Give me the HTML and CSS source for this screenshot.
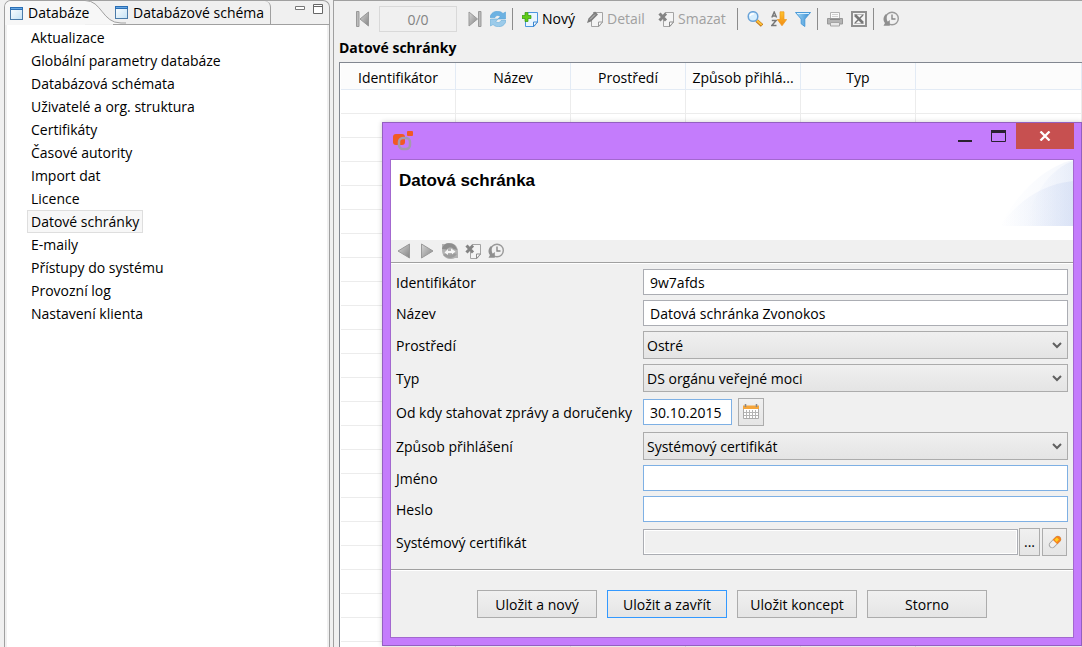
FILE: index.html
```html
<!DOCTYPE html>
<html lang="cs">
<head>
<meta charset="utf-8">
<title>Datové schránky</title>
<link rel="stylesheet" href="styles.css">
</head>
<body>
<svg class="defs" aria-hidden="true">
  <defs>
    <linearGradient id="gray" x1="0" y1="0" x2="1" y2="1"><stop offset="0" stop-color="#d6d6d6"/><stop offset="1" stop-color="#858585"/></linearGradient>
    <linearGradient id="winfill" x1="0" y1="0" x2="1" y2="1"><stop offset="0" stop-color="#fff"/><stop offset="1" stop-color="#c4e2f5"/></linearGradient>
    <linearGradient id="funnel" x1="0" x2="1"><stop offset="0" stop-color="#a6dcf8"/><stop offset="1" stop-color="#3388d0"/></linearGradient>
    <linearGradient id="orange" x1="0" y1="0" x2="0" y2="1"><stop offset="0" stop-color="#ffc52e"/><stop offset="1" stop-color="#f28a12"/></linearGradient>
    <linearGradient id="swoosh" x1="0" x2="1"><stop offset="0" stop-color="#cfdcf5" stop-opacity="0"/><stop offset="1" stop-color="#c3d1f0" stop-opacity=".62"/></linearGradient>
  </defs>
  <symbol id="i-window" viewBox="0 0 13 13"><rect x=".5" y=".5" width="12" height="12" fill="url(#winfill)" stroke="#4b7ba9"/><path d="M0 0h13v3H0z" fill="#2b6fb5"/><path d="M1 1h11v1H1z" fill="#69a9e4"/></symbol>
  <symbol id="i-clock" viewBox="0 0 16 16"><circle cx="9" cy="7.5" r="6.300" fill="#f1f1f1" stroke="#9a9a9a" stroke-width="1.400"/><path d="M9 3.500V8h3.500" fill="none" stroke="#888" stroke-width="1.400"/><path d="M2.600 3.200C-.2 6.500 0 10 2 12L.5 14.700h6.300V9L4.700 10.700C3.300 8.700 3 6 4.200 3.500z" fill="#8f8f8f"/></symbol>
  <symbol id="i-delete" viewBox="0 0 16 16"><path d="M7 1.500h8.500v9.500L12 15.500H5.500V9" fill="#f4f4f4" stroke="#a4a4a4"/><path d="M11.500 15.500V11h4z" fill="#fff" stroke="#8b8b8b"/><path d="M1.500 2.500l6.500 7M8 2.500l-6.500 7" stroke="#848484" stroke-width="3"/></symbol>
  <symbol id="i-edit" viewBox="0 0 16 16"><path d="M6 1.500h9.500v9.500L12 15.500H4.500V8" fill="#f4f4f4" stroke="#a4a4a4"/><path d="M11.500 15.500V11h4z" fill="#fff" stroke="#999"/><path d="M8 .5L11 3.500 4 10.500 0 12l1.500-4.500z" fill="#7d7d7d"/><path d="M3 8.500l5-5" stroke="#c8c8c8"/></symbol>
</svg>

<aside class="view">
  <div class="tabbar" role="tablist">
    <button class="tab tab-active" role="tab" aria-selected="true">
      <svg class="tab-curve" viewBox="0 0 42 24"><path d="M0 .5h1C18 .5 18 23.500 37 23.500h5V24H0z" fill="#f7f7f7"/><path d="M0 .5h1C18 .5 18 23 37 23h5" fill="none" stroke="#a0a0a0"/></svg>
      <svg class="i13"><use href="#i-window"/></svg><span>Databáze</span>
    </button>
    <button class="tab tab-other" role="tab" aria-selected="false"><svg class="i13"><use href="#i-window"/></svg><span>Databázové schéma</span></button>
    <div class="tab-tools">
      <button aria-label="Minimalizovat"><svg width="10" height="12"><path d="M.5 3.500h9v3h-9z" fill="#fff" stroke="#777"/></svg></button>
      <button aria-label="Maximalizovat"><svg width="10" height="12"><path d="M.5 1.500h9v9h-9zM0 3.500h10" fill="#fff" stroke="#666"/></svg></button>
    </div>
  </div>
  <ul class="tree">
    <li><a href="#">Aktualizace</a></li>
    <li><a href="#">Globální parametry databáze</a></li>
    <li><a href="#">Databázová schémata</a></li>
    <li><a href="#">Uživatelé a org. struktura</a></li>
    <li><a href="#">Certifikáty</a></li>
    <li><a href="#">Časové autority</a></li>
    <li><a href="#">Import dat</a></li>
    <li><a href="#">Licence</a></li>
    <li><a href="#" class="selected">Datové schránky</a></li>
    <li><a href="#">E-maily</a></li>
    <li><a href="#">Přístupy do systému</a></li>
    <li><a href="#">Provozní log</a></li>
    <li><a href="#">Nastavení klienta</a></li>
  </ul>
</aside>

<main class="editor">
  <div class="toolbar">
    <button aria-label="První"><svg class="i16" viewBox="0 0 16 16"><path d="M1.500 .5H4v15H1.500z" fill="#bbb" stroke="#999"/><path d="M13.500 1v14L5 8z" fill="url(#gray)" stroke="#999"/></svg></button>
    <input class="pager" value="0/0" aria-label="Záznam" disabled>
    <button aria-label="Poslední"><svg class="i16" viewBox="0 0 16 16"><path d="M12.500 .5H15v15h-2.500z" fill="#bbb" stroke="#999"/><path d="M3 1v14l8.500-7z" fill="url(#gray)" stroke="#999"/></svg></button>
    <button aria-label="Obnovit"><svg class="i16" viewBox="0 0 16 16"><path d="M0 6.500C1-.2 9-1.500 13 2.500L15.500 1v7H8l2.200-2.500C8.500 4 6 4 5 6.500z" fill="#6db2e2" stroke="#58a2d6" stroke-width=".6"/><path d="M16 9.500c-1 6.700-9 8-13 4L.5 15V8H8l-2.200 2.500c1.700 1.500 4.200 1.500 5.200-1z" fill="#9ccbea" stroke="#67acd9" stroke-width=".6"/></svg></button>
    <span class="sep"></span>
    <button class="labelled new"><svg class="i16" viewBox="0 0 16 16"><path d="M6 1.500h9.500V11L12 15.500H3.500V8" fill="#e9f5ff" stroke="#4b96df"/><path d="M11.500 15.500V11h4z" fill="#fff" stroke="#3b86d0"/><path d="M3 1.500h3v3h3v3H6v3H3v-3H0v-3h3z" fill="#62cc18" stroke="#319510" stroke-width=".7"/></svg><span>Nový</span></button>
    <button class="labelled detail" disabled><svg class="i16"><use href="#i-edit"/></svg><span>Detail</span></button>
    <button class="labelled remove" disabled><svg class="i16"><use href="#i-delete"/></svg><span>Smazat</span></button>
    <span class="sep"></span>
    <button aria-label="Hledat"><svg class="i16" viewBox="0 0 16 16"><path d="M9.500 9.500l5.500 5" stroke="#b96d13" stroke-width="3.400"/><path d="M9.800 9.500l5 4.600" stroke="#ffc23b" stroke-width="2"/><circle cx="6" cy="5.500" r="4.800" fill="#d7efff" stroke="#6aa3d8" stroke-width="1.500"/><path d="M3 5c.5-2 2-2.500 4-2.300" stroke="#fff" stroke-width="1.500" fill="none"/></svg></button>
    <button aria-label="Řadit"><svg class="i16" viewBox="0 0 16 16"><path d="M.8 6.500L3.200 1l2.400 5.500M1.500 5h3.400M.8 9.500h4.400l-4.400 5h4.700" fill="none" stroke="#777" stroke-width="1.400"/><path d="M9 .8h4v7.700h2.700L11 14.800 6.300 8.500H9z" fill="url(#orange)" stroke="#ed9821" stroke-width=".7"/></svg></button>
    <button aria-label="Filtr"><svg class="i16" viewBox="0 0 16 16"><path d="M.5 1.500h15L9.800 8v7.500l-3.600-2.700V8z" fill="url(#funnel)" stroke="#4a9ad8"/><path d="M2 2.500h12" stroke="#d9f1ff"/></svg></button>
    <span class="sep"></span>
    <button aria-label="Tisk"><svg class="i16" viewBox="0 0 16 16"><path d="M3.500 7V1.500h9V7" fill="#fafafa" stroke="#b4b4b4"/><path d="M5 3.500h6M5 5.500h6" stroke="#d0d0d0"/><path d="M.5 7.500h15V13H.5z" fill="#b4b4b4" stroke="#999"/><path d="M3.500 11.500h9v3.500h-9z" fill="#e8e8e8" stroke="#a4a4a4"/><path d="M3 8.500h10" stroke="#888"/></svg></button>
    <button aria-label="Export do Excelu"><svg class="i16" viewBox="0 0 16 16"><path d="M1 1h14v14H1z" fill="#f5f5f5" stroke="#909090" stroke-width="2"/><path d="M3 3.500h10M3 12.500h10" stroke="#bbb"/><path d="M4 4l8 8" stroke="#777" stroke-width="2.600"/><path d="M12 4l-8 8" stroke="#777" stroke-width="1.500"/></svg></button>
    <span class="sep"></span>
    <button aria-label="Historie"><svg class="i16"><use href="#i-clock"/></svg></button>
  </div>
  <h1>Datové schránky</h1>
  <div class="table-wrap">
    <table>
      <colgroup><col class="c"><col class="c"><col class="c"><col class="c"><col class="c"><col></colgroup>
      <thead><tr><th>Identifikátor</th><th>Název</th><th>Prostředí</th><th>Způsob přihlá...</th><th>Typ</th><th></th></tr></thead>
      <tbody>
        <tr><td></td><td></td><td></td><td></td><td></td><td></td></tr>
        <tr><td></td><td></td><td></td><td></td><td></td><td></td></tr>
        <tr><td></td><td></td><td></td><td></td><td></td><td></td></tr>
        <tr><td></td><td></td><td></td><td></td><td></td><td></td></tr>
        <tr><td></td><td></td><td></td><td></td><td></td><td></td></tr>
        <tr><td></td><td></td><td></td><td></td><td></td><td></td></tr>
        <tr><td></td><td></td><td></td><td></td><td></td><td></td></tr>
        <tr><td></td><td></td><td></td><td></td><td></td><td></td></tr>
        <tr><td></td><td></td><td></td><td></td><td></td><td></td></tr>
        <tr><td></td><td></td><td></td><td></td><td></td><td></td></tr>
        <tr><td></td><td></td><td></td><td></td><td></td><td></td></tr>
        <tr><td></td><td></td><td></td><td></td><td></td><td></td></tr>
        <tr><td></td><td></td><td></td><td></td><td></td><td></td></tr>
        <tr><td></td><td></td><td></td><td></td><td></td><td></td></tr>
        <tr><td></td><td></td><td></td><td></td><td></td><td></td></tr>
        <tr><td></td><td></td><td></td><td></td><td></td><td></td></tr>
        <tr><td></td><td></td><td></td><td></td><td></td><td></td></tr>
        <tr><td></td><td></td><td></td><td></td><td></td><td></td></tr>
        <tr><td></td><td></td><td></td><td></td><td></td><td></td></tr>
        <tr><td></td><td></td><td></td><td></td><td></td><td></td></tr>
        <tr><td></td><td></td><td></td><td></td><td></td><td></td></tr>
        <tr><td></td><td></td><td></td><td></td><td></td><td></td></tr>
        <tr><td></td><td></td><td></td><td></td><td></td><td></td></tr>
        <tr><td></td><td></td><td></td><td></td><td></td><td></td></tr>
      </tbody>
    </table>
  </div>
</main>

<section class="dialog" role="dialog" aria-labelledby="dialog-title">
  <div class="titlebar">
    <svg class="logo" viewBox="0 0 21 20"><rect x="0" y="3" width="12" height="11" rx="3" fill="#f15a24"/><rect x="14" y="0" width="6" height="5" rx="1" fill="#f15a24"/><rect x="6" y="7" width="11" height="11" rx="4" fill="none" stroke="#a59aae" stroke-width="2.500"/></svg>
    <div class="win-buttons">
      <button aria-label="Minimalizovat"><svg width="14" height="12"><path d="M0 10h14v2H0z" fill="#2a2130"/></svg></button>
      <button aria-label="Maximalizovat"><svg width="15" height="12"><path d="M.5 .5h14v11H.5z" fill="none" stroke="#2a2130"/><path d="M0 0h15v3H0z" fill="#2a2130"/></svg></button>
      <button class="close" aria-label="Zavřít"><svg width="12" height="10"><path d="M1.500 .5l9 9M10.500 .5l-9 9" stroke="#fff" stroke-width="2.300"/></svg></button>
    </div>
  </div>
  <div class="client">
    <header class="banner">
      <h2 id="dialog-title">Datová schránka</h2>
      <svg class="swoosh" viewBox="0 0 73 66"><path d="M0 66C15 36 43 7 73 0v66z" fill="url(#swoosh)" opacity=".3"/><path d="M27 66C32 31 53 8 73 1v65z" fill="url(#swoosh)" opacity=".4"/><path d="M0 66C20 38 45 24 73 21v45z" fill="url(#swoosh)" opacity=".6"/></svg>
    </header>
    <div class="dialog-tools">
      <button aria-label="Předchozí"><svg class="i16" viewBox="0 0 16 16"><path d="M13.500 1v14L2 8z" fill="url(#gray)" stroke="#999"/></svg></button>
      <button aria-label="Další"><svg class="i16" viewBox="0 0 16 16"><path d="M2.500 1v14L14 8z" fill="url(#gray)" stroke="#999"/></svg></button>
      <button aria-label="Obnovit"><svg class="i16" viewBox="0 0 16 16"><path d="M0 1h3c4-2 9-1 11.500 2.500C16 6 16 8 16 10v5h-3c-4 2-9 1-11.500-2.500C0 10 0 8 0 6z" fill="#b2b2b2"/><path d="M0 6C1-.5 9-1.500 13 2.500l2.500 4.500-4-1C10 4 6 4 5 6.500z" fill="#8d8d8d"/><path d="M1 12l3 2c4 2 8 1 11-3l-4-1c-2 2-4 2-6 0z" fill="#9c9c9c"/><path d="M2.500 9.500L6 6v2h3V5.500l4.500 3L10 11.500V10H6v2z" fill="#f6f6f6"/></svg></button>
      <button aria-label="Smazat"><svg class="i16"><use href="#i-delete"/></svg></button>
      <button aria-label="Historie"><svg class="i16"><use href="#i-clock"/></svg></button>
    </div>
    <form>
      <div class="fields">
        <label for="ident">Identifikátor</label><input id="ident" type="text" value="9w7afds">
        <label for="name">Název</label><input id="name" type="text" value="Datová schránka Zvonokos">
        <label for="env">Prostředí</label><select id="env"><option>Ostré</option></select>
        <label for="type">Typ</label><select id="type"><option>DS orgánu veřejné moci</option></select>
        <label for="since">Od kdy stahovat zprávy a doručenky</label>
        <div class="row date-row"><input id="since" class="date blue" type="text" value="30.10.2015">
          <button type="button" class="btn calendar" aria-label="Kalendář"><svg class="i16" viewBox="0 0 16 16"><path d="M.5 2.500h15v12H.5z" fill="#fff" stroke="#aaa"/><path d="M0 1.500h16V5H0z" fill="#f4a53a"/><path d="M2.500 0v3M13.500 0v3" stroke="#888" stroke-width="1.500"/><path d="M1 8.500h14M1 11.500h14M3.500 6v8M6.500 6v8M9.500 6v8M12.500 6v8" stroke="#b4b4b4"/></svg></button></div>
        <label for="login">Způsob přihlášení</label><select id="login"><option>Systémový certifikát</option></select>
        <label for="user">Jméno</label><input id="user" class="blue" type="text">
        <label for="pass">Heslo</label><input id="pass" class="blue" type="password">
        <label for="cert">Systémový certifikát</label>
        <div class="row cert-row"><input id="cert" type="text" readonly>
          <button type="button" class="btn browse" aria-label="Vybrat">...</button>
          <button type="button" class="btn erase" aria-label="Vymazat"><svg width="14" height="14" viewBox="0 0 14 14"><path d="M4.200 9.800l5.600-5.600" stroke="#a4a4a4" stroke-width="6.600" stroke-linecap="round"/><path d="M4.200 9.800L7 7" stroke="#f0f0f0" stroke-width="5" stroke-linecap="round"/><path d="M4.700 4.700L7.500 1.900c3-3 7.600 1.600 4.600 4.600L9.300 9.300z" fill="#f58220"/><path d="M6.500 4.700L8.800 2.400 11 4.600 8.700 6.900z" fill="#ffcf1f"/></svg></button></div>
      </div>
      <footer class="actions">
        <button type="button" class="btn">Uložit a nový</button>
        <button type="submit" class="btn primary">Uložit a zavřít</button>
        <button type="button" class="btn">Uložit koncept</button>
        <button type="button" class="btn">Storno</button>
      </footer>
    </form>
  </div>
</section>
</body>
</html>
```
FILE: styles.css
```css
* { box-sizing: border-box; }

body {
  margin: 0;
  height: 100vh;
  display: flex;
  position: relative;
  overflow: hidden;
  background: #f0f0f0;
  color: #000;
  font: 14px/20px "Open Sans", "Noto Sans", sans-serif;
}

button, input, select { font: inherit; color: inherit; margin: 0; }
button { padding: 0; border: 0; background: none; }
svg { display: block; flex: none; }
h1, h2 { margin: 0; }
.defs { position: absolute; width: 0; height: 0; }
.i13 { width: 13px; height: 13px; }
.i16 { width: 16px; height: 16px; }

/* Left view */
.view {
  flex: none;
  width: 326px;
  margin-left: 4px;
  border: 1px solid #a0a0a0;
  border-bottom: 0;
  border-radius: 7px 7px 0 0;
  display: flex;
  flex-direction: column;
}
.tabbar { display: flex; height: 24px; flex: none; }
.tab {
  display: flex;
  align-items: center;
  gap: 5px;
  white-space: nowrap;
}
.tab-active {
  position: relative;
  width: 80px;
  padding-left: 5px;
  border-radius: 6px 0 0 0;
  background: #f7f7f7;
}
.tab-active span { position: relative; }
.tab-curve { position: absolute; left: 79px; top: -1px; width: 42px; height: 24px; }
.tab-other {
  width: 186px;
  padding-left: 30px;
  border-right: 1px solid #a0a0a0;
  border-bottom: 1px solid #a0a0a0;
  border-radius: 0 6px 0 0;
  clip-path: inset(0 0 0 28px);
}
.tab-tools {
  flex: 1;
  display: flex;
  justify-content: flex-end;
  align-items: flex-start;
  gap: 8px;
  padding: 2px 6px;
  border-bottom: 1px solid #a0a0a0;
}
.tree {
  flex: 1;
  margin: 0 2px;
  padding: 1px 0 0 20px;
  list-style: none;
  background: #fff;
}
.tree li { height: 23px; display: flex; }
.tree a {
  padding: 0 3px;
  line-height: 21px;
  border: 1px solid transparent;
  color: #000;
  text-decoration: none;
}
.tree .selected { background: #f7f7f7; border-color: #dedede; }

/* Right view */
.editor {
  flex: 1;
  min-width: 0;
  margin-left: 3px;
  border-top: 1px solid #a0a0a0;
  border-left: 1px solid #a0a0a0;
  padding-left: 5px;
  display: flex;
  flex-direction: column;
}
.toolbar {
  flex: none;
  height: 36px;
  padding-left: 16px;
  display: flex;
  align-items: center;
  gap: 8px;
}
.pager {
  width: 78px;
  height: 26px;
  margin-right: 1px;
  border: 1px solid #d9d9d9;
  background: #f0f0f0;
  text-align: center;
  color: #838383;
}
.sep { width: 1px; height: 22px; background: #8c8c8c; margin: 0 1px 0 -2px; }
.labelled { display: flex; align-items: center; gap: 4px; white-space: nowrap; }
.labelled:disabled { color: #a0a0a0; }
.new { width: 57px; }
.detail { width: 63px; }
.remove { width: 73px; }
h1 { flex: none; font-size: 14px; line-height: 22px; height: 25px; }
.table-wrap {
  flex: 1;
  min-height: 0;
  overflow: hidden;
  border-top: 1px solid #828790;
  border-left: 1px solid #828790;
  padding-left: 1px;
  background: #fff;
}
table { width: 100%; table-layout: fixed; border-collapse: separate; border-spacing: 0; }
.c { width: 115px; }
th, td { padding: 0; border-right: 1px solid #ececec; border-bottom: 1px solid #ececec; }
th { height: 27px; font-weight: 400; border-color: #e3ebf5; background: #fcfcfc; white-space: nowrap; padding-top: 4px; }
td { height: 24px; }

/* Dialog */
.dialog {
  position: absolute;
  left: 382px;
  right: 0;
  top: 122px;
  padding: 0 7px 7px;
  border: 1px solid #9360c0;
  background: #c47cfc;
  box-shadow: 0 0 5px #0003;
}
.titlebar { height: 36px; padding-left: 3px; display: flex; justify-content: space-between; }
.logo { width: 21px; height: 20px; margin-top: 8px; }
.win-buttons { display: flex; align-items: flex-start; gap: 19px; }
.win-buttons button { padding-top: 7px; }
.win-buttons .close {
  width: 58px;
  height: 26px;
  margin-left: -9px;
  padding: 0;
  display: grid;
  place-items: center;
  background: #c75050;
}
.client { border: 1px solid #a368cf; background: #f0f0f0; }
.banner { height: 80px; padding: 11px 8px; position: relative; background: #fff; }
.banner h2 { font: bold 17px/20px "Liberation Sans", Arial, sans-serif; }
.swoosh { position: absolute; right: 0; top: 0; width: 73px; height: 66px; }
.dialog-tools {
  height: 23px;
  padding: 3px 5px 0;
  display: flex;
  align-items: flex-start;
  gap: 7px;
  border-bottom: 1px solid #a0a0a0;
  box-shadow: 0 1px #fff;
}
.fields {
  padding: 6px 5px 12px;
  display: grid;
  grid-template-columns: 242px minmax(0, 1fr);
  gap: 5px;
  align-items: center;
}
.fields label { padding-top: 2px; white-space: nowrap; }
.fields input {
  width: 100%;
  height: 26px;
  padding: 0 6px;
  border: 1px solid #abadb3;
  border-radius: 0;
  background: #fff;
}
.fields .blue { border-color: #7eb0e4; }
.fields input:read-only { background: #f0f0f0; box-shadow: inset 0 0 0 1px #fff; }
.fields select {
  appearance: none;
  width: 100%;
  height: 28px;
  padding: 2px 24px 0 3px;
  border: 1px solid #acacac;
  border-radius: 0;
  background: url("data:image/svg+xml,%3Csvg xmlns='http://www.w3.org/2000/svg' width='10' height='7'%3E%3Cpath d='M1 1l4 4 4-4' fill='none' stroke='%23606060' stroke-width='2'/%3E%3C/svg%3E") no-repeat right 5px center, linear-gradient(#f0f0f0, #e4e4e4);
}
.row { display: flex; align-items: center; height: 30px; }
.date-row { gap: 6px; }
.fields .date { width: 89px; }
.cert-row { padding-right: 1px; gap: 1px; }
.cert-row input { flex: 1; min-width: 0; }
.btn {
  height: 28px;
  border: 1px solid #acacac;
  background: linear-gradient(#f0f0f0, #e5e5e5);
  display: grid;
  place-items: center;
}
.calendar { width: 26px; }
.browse { width: 21px; }
.erase { width: 25px; margin-left: 1px; }
.actions {
  padding: 20px 5px 19px;
  display: flex;
  justify-content: center;
  gap: 10px;
  border-top: 1px solid #a0a0a0;
  box-shadow: inset 0 1px #fff;
}
.actions .btn { width: 120px; padding-top: 2px; }
.actions .primary { border-color: #3399ff; }
```
